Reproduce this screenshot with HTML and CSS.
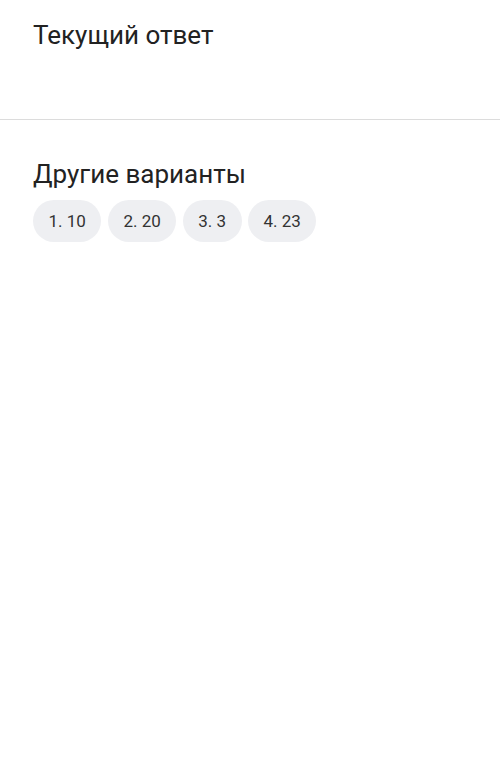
FILE: index.html
```html
<!DOCTYPE html>
<html lang="ru">
<head>
<meta charset="utf-8">
<link rel="stylesheet" href="styles.css">
</head>
<body>
<section class="current">
  <h2 class="title">Текущий ответ</h2>
</section>
<hr class="divider">
<section class="others">
  <h2 class="title">Другие варианты</h2>
  <div class="chips">
    <span class="chip">1. 10</span>
    <span class="chip">2. 20</span>
    <span class="chip">3. 3</span>
    <span class="chip">4. 23</span>
  </div>
</section>
</body>
</html>
```
FILE: styles.css
```css
html, body {
  margin: 0;
  padding: 0;
  background: #ffffff;
}
body {
  font-family: Roboto, "Noto Sans", sans-serif;
  color: #222222;
}
.title {
  margin: 0;
  font-size: 26px;
  font-weight: 400;
  line-height: 30px;
  color: #222222;
}
.current {
  height: 119px;
  box-sizing: border-box;
  padding: 20px 33px 0;
}
.divider {
  margin: 0;
  border: 0;
  height: 1px;
  background: #dcdcdc;
}
.others {
  padding: 39px 33px 0;
}
.chips {
  display: flex;
  gap: 6.5px;
  margin-top: 11px;
}
.chip {
  display: inline-flex;
  align-items: center;
  height: 42px;
  padding: 0 15.5px;
  border-radius: 21px;
  background: #eeeff2;
  font-size: 17px;
  color: #333333;
}
```
